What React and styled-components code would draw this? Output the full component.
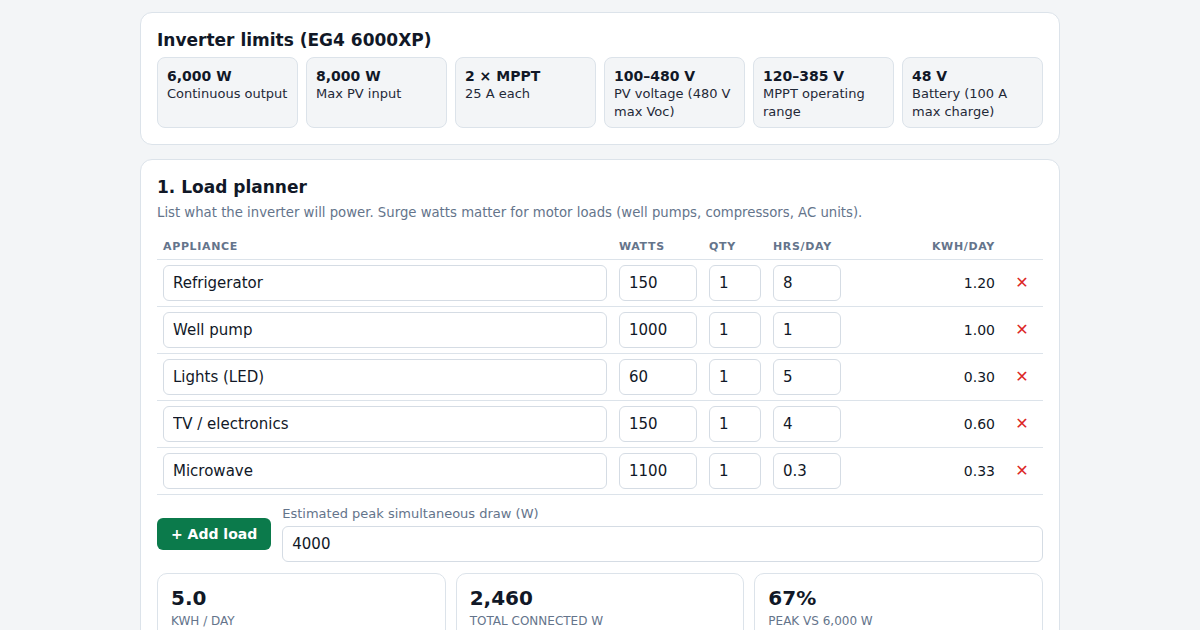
import React from "react";
import { styled, createGlobalStyle } from "styled-components";

const GlobalStyle = createGlobalStyle`
  * { box-sizing: border-box; }
  body {
    margin: 0;
    background: #f3f5f7;
    font-family: "DejaVu Sans", "Noto Sans", sans-serif;
    color: #111827;
  }
`;

const specs = [
  { value: "6,000 W", label: "Continuous output" },
  { value: "8,000 W", label: "Max PV input" },
  { value: "2 × MPPT", label: "25 A each" },
  { value: "100–480 V", label: "PV voltage (480 V max Voc)" },
  { value: "120–385 V", label: "MPPT operating range" },
  { value: "48 V", label: "Battery (100 A max charge)" },
];

const loads = [
  { name: "Refrigerator", watts: "150", qty: "1", hrs: "8" },
  { name: "Well pump", watts: "1000", qty: "1", hrs: "1" },
  { name: "Lights (LED)", watts: "60", qty: "1", hrs: "5" },
  { name: "TV / electronics", watts: "150", qty: "1", hrs: "4" },
  { name: "Microwave", watts: "1100", qty: "1", hrs: "0.3" },
];

const stats = [
  { value: "5.0", label: "kWh / day" },
  { value: "2,460", label: "Total connected W" },
  { value: "67%", label: "Peak vs 6,000 W" },
];

const App = () => {
  const kwh = (l) => (Number(l.watts) * Number(l.qty) * Number(l.hrs)) / 1000;

  return (
    <>
      <GlobalStyle />
      <Page>
        <Card>
          <Title>Inverter limits (EG4 6000XP)</Title>
          <SpecGrid>
            {specs.map((s) => (
              <SpecTile key={s.value}>
                <SpecValue>{s.value}</SpecValue>
                <SpecLabel>{s.label}</SpecLabel>
              </SpecTile>
            ))}
          </SpecGrid>
        </Card>

        <Card>
          <Title>1. Load planner</Title>
          <Subtitle>
            List what the inverter will power. Surge watts matter for motor loads
            (well pumps, compressors, AC units).
          </Subtitle>
          <HeadRow>
            <HeadCell>Appliance</HeadCell>
            <HeadCell>Watts</HeadCell>
            <HeadCell>Qty</HeadCell>
            <HeadCell>Hrs/day</HeadCell>
            <HeadCell $right>kWh/day</HeadCell>
            <HeadCell />
          </HeadRow>
          {loads.map((l) => (
            <Row key={l.name}>
              <Cell><Input defaultValue={l.name} /></Cell>
              <Cell><Input defaultValue={l.watts} /></Cell>
              <Cell><Input defaultValue={l.qty} /></Cell>
              <Cell><Input defaultValue={l.hrs} /></Cell>
              <Cell $right><Kwh>{kwh(l).toFixed(2)}</Kwh></Cell>
              <Cell $center><RemoveButton>✕</RemoveButton></Cell>
            </Row>
          ))}
          <Actions>
            <AddButton>+ Add load</AddButton>
            <Field>
              <FieldLabel>Estimated peak simultaneous draw (W)</FieldLabel>
              <Input defaultValue="4000" />
            </Field>
          </Actions>
          <StatGrid>
            {stats.map((s) => (
              <StatTile key={s.label}>
                <StatValue>{s.value}</StatValue>
                <StatLabel>{s.label}</StatLabel>
              </StatTile>
            ))}
          </StatGrid>
        </Card>
      </Page>
    </>
  );
};

export default App;

const Page = styled.div`
  width: 920px;
  margin: 0 auto;
  padding-top: 12px;
`;

const Card = styled.section`
  background: #ffffff;
  border: 1px solid #dce3ea;
  border-radius: 12px;
  padding: 16px;
  margin-bottom: 14px;
`;

const Title = styled.h2`
  margin: 0 0 6px;
  font-size: 17px;
  line-height: 22px;
  font-weight: 700;
  color: #111827;
`;

const SpecGrid = styled.div`
  display: grid;
  grid-template-columns: repeat(6, 1fr);
  gap: 8px;
`;

const SpecTile = styled.div`
  height: 71px;
  background: #f3f5f7;
  border: 1px solid #dce3ea;
  border-radius: 8px;
  padding: 9px 9px 7px;
`;

const SpecValue = styled.div`
  font-size: 14px;
  font-weight: 700;
  line-height: 18px;
  color: #111827;
`;

const SpecLabel = styled.div`
  font-size: 13px;
  line-height: 18px;
  color: #1f2937;
`;

const Subtitle = styled.p`
  margin: 5px 0 11px;
  font-size: 13.25px;
  line-height: 18px;
  color: #64748b;
`;

const columns = "456px 90px 64px 80px 1fr 42px";

const HeadRow = styled.div`
  display: grid;
  grid-template-columns: ${columns};
  height: 27px;
  align-items: center;
  border-bottom: 1px solid #dce3ea;
`;

const HeadCell = styled.div`
  padding: 0 6px;
  font-size: 11px;
  font-weight: 700;
  letter-spacing: 0.06em;
  text-transform: uppercase;
  color: #64748b;
  text-align: ${(p) => (p.$right ? "right" : "left")};
`;

const Row = styled.div`
  display: grid;
  grid-template-columns: ${columns};
  align-items: center;
  height: 47px;
  border-bottom: 1px solid #dce3ea;
`;

const Cell = styled.div`
  padding: 0 6px;
  display: flex;
  justify-content: ${(p) => (p.$right ? "flex-end" : p.$center ? "center" : "flex-start")};
`;

const Input = styled.input`
  width: 100%;
  height: 36px;
  border: 1px solid #d5dce4;
  border-radius: 6px;
  padding: 0 9px;
  font-family: "DejaVu Sans", sans-serif;
  font-size: 15px;
  color: #111827;
  background: #ffffff;
  outline: none;
`;

const Kwh = styled.span`
  font-size: 14px;
  color: #111827;
`;

const RemoveButton = styled.button`
  border: none;
  background: none;
  padding: 0;
  color: #dc2626;
  font-size: 16px;
  line-height: 1;
  font-family: "DejaVu Sans", sans-serif;
  cursor: pointer;
`;

const Actions = styled.div`
  display: flex;
  align-items: center;
  gap: 11px;
  margin-top: 11px;
`;

const AddButton = styled.button`
  flex: none;
  height: 32px;
  padding: 0 14px;
  border: none;
  border-radius: 6px;
  background: #0b7a4b;
  color: #ffffff;
  font-family: "DejaVu Sans", sans-serif;
  font-size: 14px;
  font-weight: 700;
  cursor: pointer;
`;

const Field = styled.label`
  flex: 1;
  display: flex;
  flex-direction: column;
  gap: 4px;
`;

const FieldLabel = styled.span`
  font-size: 13px;
  line-height: 16px;
  color: #64748b;
`;

const StatGrid = styled.div`
  display: grid;
  grid-template-columns: repeat(3, 1fr);
  gap: 10px;
  margin-top: 11px;
`;

const StatTile = styled.div`
  background: #ffffff;
  border: 1px solid #dce3ea;
  border-radius: 10px;
  padding: 12px 13px;
`;

const StatValue = styled.div`
  font-size: 20px;
  font-weight: 700;
  line-height: 24px;
  color: #111827;
`;

const StatLabel = styled.div`
  margin-top: 3px;
  font-size: 12px;
  line-height: 16px;
  text-transform: uppercase;
  color: #64748b;
`;
